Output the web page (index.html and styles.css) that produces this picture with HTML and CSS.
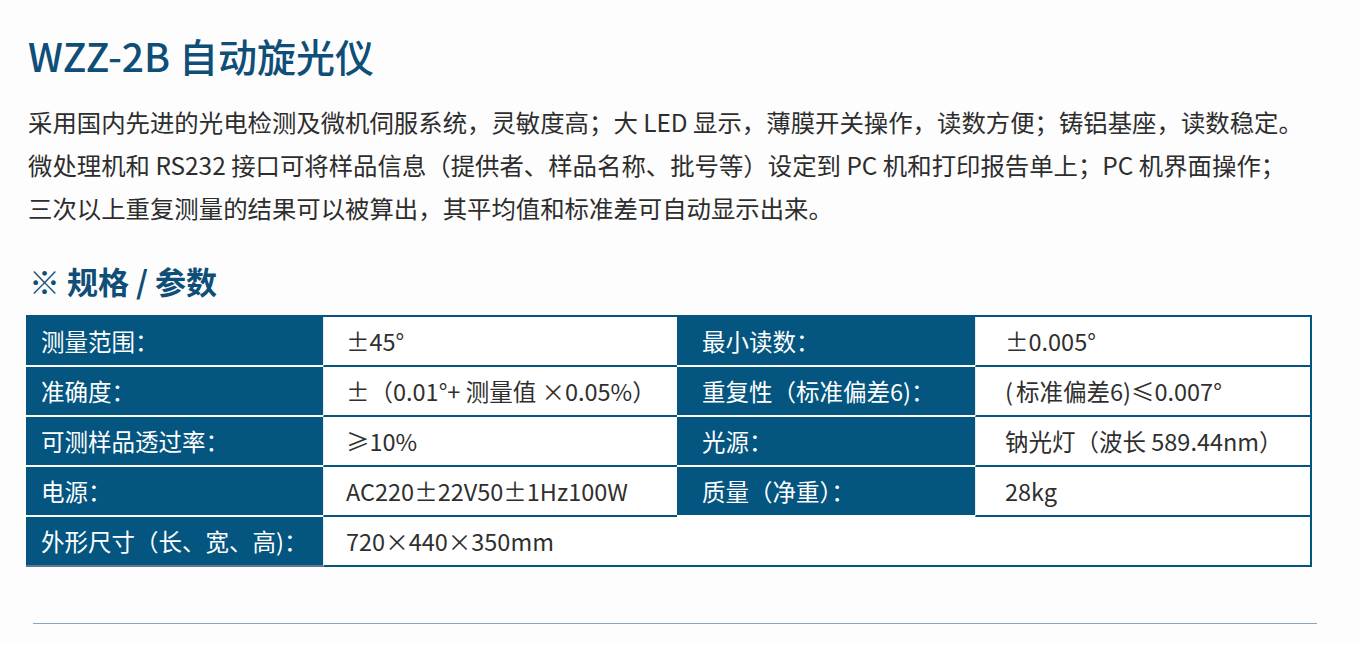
FILE: index.html
```html
<!DOCTYPE html>
<html lang="zh-CN">
<head>
<meta charset="utf-8">
<title>WZZ-2B 自动旋光仪</title>
<link rel="stylesheet" href="styles.css">
</head>
<body>
<div class="page">
  <h1 class="title">WZZ-2B 自动旋光仪</h1>
  <p class="intro">采用国内先进的光电检测及微机伺服系统，灵敏度高；大 LED 显示，薄膜开关操作，读数方便；铸铝基座，读数稳定。<br>微处理机和 RS232 接口可将样品信息（提供者、样品名称、批号等）设定到 PC 机和打印报告单上；PC 机界面操作；<br>三次以上重复测量的结果可以被算出，其平均值和标准差可自动显示出来。</p>
  <h2 class="section">※ 规格 / 参数</h2>
  <table class="spec">
    <colgroup>
      <col class="c1"><col class="c2"><col class="c3"><col class="c4">
    </colgroup>
    <tbody>
      <tr>
        <td class="lab l1">测量范围：</td>
        <td class="val v1">±45°</td>
        <td class="lab l2">最小读数：</td>
        <td class="val v2">±0.005°</td>
      </tr>
      <tr>
        <td class="lab l1">准确度：</td>
        <td class="val v1">±（0.01°+ 测量值 ×0.05%）</td>
        <td class="lab l2">重复性（标准偏差6)：</td>
        <td class="val v2"><span class="paren">(</span>标准偏差6)≤0.007°</td>
      </tr>
      <tr>
        <td class="lab l1">可测样品透过率：</td>
        <td class="val v1">≥10%</td>
        <td class="lab l2">光源：</td>
        <td class="val v2">钠光灯（波长 589.44nm）</td>
      </tr>
      <tr>
        <td class="lab l1">电源：</td>
        <td class="val v1">AC220±22V50±1Hz100W</td>
        <td class="lab l2">质量（净重）：</td>
        <td class="val v2">28kg</td>
      </tr>
      <tr class="last">
        <td class="lab l1">外形尺寸（长、宽、高)：</td>
        <td class="val v1" colspan="3">720×440×350mm</td>
      </tr>
    </tbody>
  </table>
  <div class="rule"></div>
</div>
</body>
</html>
```
FILE: styles.css
```css
html, body {
  margin: 0;
  padding: 0;
  background: #fdfdfe;
}
body {
  font-family: "Noto Sans CJK SC", "Noto Sans", sans-serif;
  color: #2f2f2f;
}
.page {
  padding: 29px 0 0 26px;
  width: 1286px;
}
.title {
  margin: 0;
  padding-left: 2px;
  font-size: 39px;
  line-height: 52px;
  font-weight: 500;
  color: #0e4e77;
}
.intro {
  margin: 19px 0 0;
  padding-left: 2px;
  font-size: 24.4px;
  line-height: 43px;
  color: #2d2d2d;
}
.section {
  margin: 32px 0 0;
  padding-left: 3px;
  font-size: 31px;
  line-height: 40px;
  font-weight: 700;
  color: #0e4e77;
}
.spec {
  margin-top: 14px;
  width: 1286px;
  table-layout: fixed;
  border-collapse: separate;
  border-spacing: 0;
  border-top: 2px solid #04557f;
  border-right: 2px solid #04557f;
  font-size: 23.5px;
}
.c1 { width: 297px; }
.c2 { width: 354px; }
.c3 { width: 298px; }
.c4 { width: 335px; }
.spec td {
  height: 48px;
  padding: 0;
  vertical-align: middle;
  white-space: nowrap;
  overflow: visible;
  line-height: 48px;
}
.lab {
  background: #04557f;
  color: #ffffff;
  border-bottom: 2px solid #ffffff;
}
.val {
  background: #ffffff;
  color: #2f2f2f;
  border-bottom: 2px solid #04557f;
  border-left: 1px solid #e3ecf2;
}
.paren {
  margin-right: 3px;
}
.l1 { padding-left: 15px !important; }
.v1 { padding-left: 22px !important; }
.l2 { padding-left: 25px !important; }
.v2 { padding-left: 29px !important; }
.last .lab {
  border-bottom-color: #5d7893;
}
.rule {
  margin: 56px 0 0 7px;
  width: 1284px;
  height: 1px;
  background: #80a9c6;
}
```
